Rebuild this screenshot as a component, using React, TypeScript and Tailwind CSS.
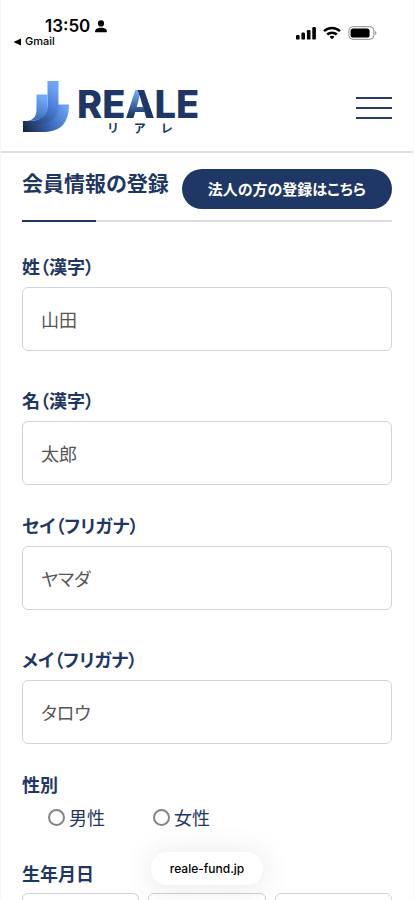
import React from "react";

function StatusBar() {
  return (
    <div className="flex h-[52px] shrink-0 items-start justify-between pr-9 pl-3 font-['Inter',sans-serif] text-black">
      <div className="flex flex-col pt-4">
        <div className="flex items-center gap-[5px] pl-8">
          <span className="text-[17px] leading-5 font-semibold">13:50</span>
          <svg className="h-[13px] w-3" viewBox="0 0 12 13" aria-hidden="true">
            <circle cx="6" cy="3.4" r="3.1" />
            <path d="M0.2 12.2v-1c0-2.2 2.4-3.4 5.8-3.4s5.8 1.2 5.8 3.4v1z" />
          </svg>
        </div>
        <a href="#gmail" className="flex items-center gap-1 text-[11px] leading-[11px] font-medium">
          <svg className="h-2 w-2" viewBox="0 0 8 8" aria-hidden="true">
            <path d="M0.5 4 8 0.4v7.2z" />
          </svg>
          Gmail
        </a>
      </div>
      <div className="flex items-center gap-[7px] pt-[26px]">
        <svg className="h-[14px] w-[21px]" viewBox="0 0 21 14" aria-hidden="true">
          <rect x="1" y="9" width="3.6" height="4.6" rx="1.2" />
          <rect x="6.4" y="6.6" width="3.6" height="7" rx="1.2" />
          <rect x="11.9" y="4" width="3.6" height="9.6" rx="1.2" />
          <rect x="17.3" y="1" width="3.6" height="12.6" rx="1.2" />
        </svg>
        <svg className="h-[14px] w-[18px]" viewBox="0 0 18 14" fill="none" stroke="#000" strokeWidth="2.5" aria-hidden="true">
          <path d="M1 5.2C5.4 0.9 12.6 0.9 17 5.2" />
          <path d="M4.2 8.5c2.7-2.5 6.9-2.5 9.6 0" />
          <path d="M9 13.2 6.5 10.7c1.4-1.2 3.6-1.2 5 0z" fill="#000" stroke="none" />
        </svg>
        <svg className="h-[14px] w-[29px]" viewBox="0 0 29 14" aria-hidden="true">
          <rect x="0.9" y="0.7" width="25" height="12.6" rx="4" fill="none" stroke="#8d8d8d" />
          <rect x="2.6" y="2.4" width="19" height="9.2" rx="2.6" />
          <path d="M27.3 5v4c1.4-.6 1.4-3.4 0-4z" fill="#777" />
        </svg>
      </div>
    </div>
  );
}

function Logo() {
  return (
    <a href="#top" aria-label="REALE リアレ" className="flex items-start gap-2">
      <svg className="h-[52px] w-[46px]" viewBox="0 0 46 52" aria-hidden="true">
        <defs>
          <linearGradient id="front" gradientUnits="userSpaceOnUse" x1="2" y1="50" x2="44" y2="26">
            <stop offset="0" stopColor="#162746" />
            <stop offset="0.5" stopColor="#3a66b5" />
            <stop offset="1" stopColor="#6ba4fa" />
          </linearGradient>
          <linearGradient id="middle" gradientUnits="userSpaceOnUse" x1="6" y1="44" x2="32" y2="6">
            <stop offset="0" stopColor="#203a6b" />
            <stop offset="0.55" stopColor="#4779cf" />
            <stop offset="1" stopColor="#6da5fb" />
          </linearGradient>
          <linearGradient id="back" gradientUnits="userSpaceOnUse" x1="8" y1="40" x2="18" y2="16">
            <stop offset="0" stopColor="#3563b0" />
            <stop offset="1" stopColor="#70a8fa" />
          </linearGradient>
        </defs>
        <path d="M35 23.5H46C46 42 38 51 20 51H0V40h14z" fill="url(#front)" />
        <path d="M24.5 0h11v24c0 13-9 19.500-23 19.500L4 40c13 0 20.500-4 20.500-16z" fill="url(#middle)" />
        <path d="M13.500 13.500h11V25c0 11-7 15-20.500 15 7-1 9.500-5 9.500-12z" fill="url(#back)" />
      </svg>
      <span className="flex flex-col items-center text-[#1f3764]">
        <span className="pt-[5px] font-['Inter',sans-serif] text-[38px] leading-9 font-extrabold">
          RE
          <span className="bg-[linear-gradient(71deg,transparent_55%,#1f3764_56%),linear-gradient(to_top,#1f3764_25%,#6ba4fa_75%)] bg-clip-text text-transparent">A</span>
          LE
        </span>
        <span className="flex gap-4 pl-1 text-[12px] leading-3 font-bold">
          <span>リ</span>
          <span>ア</span>
          <span>レ</span>
        </span>
      </span>
    </a>
  );
}

function TextField({ id, label, placeholder }: { id: string; label: string; placeholder: string }) {
  return (
    <div className="flex flex-col gap-2">
      <label htmlFor={id} className="text-[18px] leading-[26px] font-bold">{label}</label>
      <input
        id={id}
        type="text"
        placeholder={placeholder}
        className="h-16 w-full rounded-md border border-[#cfd5dc] bg-white px-[18px] text-[18px] text-[#555] placeholder:text-[#555]"
      />
    </div>
  );
}

function Radio({ label }: { label: string }) {
  return (
    <label className="flex items-center gap-1 text-[18px] leading-[26px]">
      <input type="radio" name="gender" className="size-[17px] appearance-none rounded-full border-2 border-[#858585] bg-white checked:border-[5px]" />
      {label}
    </label>
  );
}

export default function App() {
  return (
    <div className="relative flex h-screen flex-col overflow-hidden border-x border-[#f7f7f7] bg-white font-['Noto_Sans_CJK_JP',sans-serif] text-[#1f3764] [font-feature-settings:'palt']">
      <StatusBar />
      <header className="flex h-[101px] shrink-0 items-center justify-between border-b-2 border-[#dedfe0] pt-3 pr-[21px] pl-[22px]">
        <Logo />
        <button type="button" aria-label="メニュー" className="flex w-9 flex-col gap-2">
          <span className="h-[2px] bg-[#263b6b]" />
          <span className="h-[2px] bg-[#263b6b]" />
          <span className="h-[2px] bg-[#263b6b]" />
        </button>
      </header>
      <main className="px-[21px] pt-4">
        <div className="flex items-start justify-between pb-[11px]">
          <h1 className="text-[21px] leading-[26px] font-bold whitespace-nowrap">会員情報の登録</h1>
          <button type="button" className="h-10 rounded-full bg-[#1f3764] px-[26px] text-[15px] font-bold whitespace-nowrap text-white">
            法人の方の登録はこちら
          </button>
        </div>
        <div className="h-[2px] bg-[#dddddf]"><div className="h-full w-1/5 bg-[#1f3764]" /></div>
        <form className="pt-[31px]">
          <div className="flex flex-col gap-[27px]">
            <div className="flex flex-col gap-9">
              <TextField id="last-name" label="姓（漢字）" placeholder="山田" />
              <TextField id="first-name" label="名（漢字）" placeholder="太郎" />
            </div>
            <div className="flex flex-col gap-9">
              <TextField id="last-kana" label="セイ（フリガナ）" placeholder="ヤマダ" />
              <TextField id="first-kana" label="メイ（フリガナ）" placeholder="タロウ" />
            </div>
            <fieldset>
              <legend className="text-[18px] leading-[26px] font-bold">性別</legend>
              <div className="flex gap-12 pt-[7px] pl-[26px]">
                <Radio label="男性" />
                <Radio label="女性" />
              </div>
            </fieldset>
          </div>
          <fieldset className="mt-[30px]">
            <legend className="text-[18px] leading-[26px] font-bold">生年月日</legend>
            <div className="grid grid-cols-3 gap-[9px] pt-[7px]">
              <select aria-label="年" className="h-16 appearance-none rounded-md border border-[#cfd0dc] bg-white" />
              <select aria-label="月" className="h-16 appearance-none rounded-md border border-[#cfd0dc] bg-white" />
              <select aria-label="日" className="h-16 appearance-none rounded-md border border-[#cfd0dc] bg-white" />
            </div>
          </fieldset>
        </form>
      </main>
      <div className="absolute inset-x-0 bottom-[15px] flex justify-center">
        <button type="button" className="h-[33px] rounded-full bg-white px-[19px] font-['Inter',sans-serif] text-[12px] font-medium text-black shadow-[0_2px_28px_4px_rgba(0,0,0,0.08)]">
          reale-fund.jp
        </button>
      </div>
    </div>
  );
}
